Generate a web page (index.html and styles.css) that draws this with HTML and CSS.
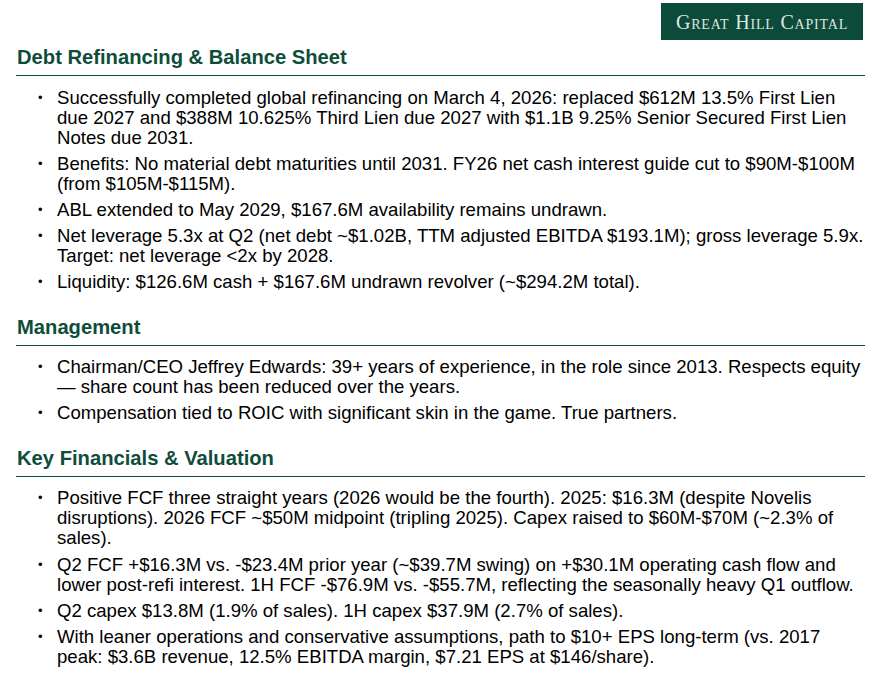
FILE: index.html
```html
<!DOCTYPE html>
<html>
<head>
<meta charset="utf-8">
<link rel="stylesheet" href="styles.css">
</head>
<body>
<div class="page">
  <header class="top">
    <div class="logo">Great Hill Capital</div>
  </header>

  <section class="sec first">
    <h2>Debt Refinancing &amp; Balance Sheet</h2>
    <ul>
      <li>Successfully completed global refinancing on March 4, 2026: replaced $612M 13.5% First Lien due 2027 and $388M 10.625% Third Lien due 2027 with $1.1B 9.25% Senior Secured First Lien Notes due 2031.</li>
      <li>Benefits: No material debt maturities until 2031. FY26 net cash interest guide cut to $90M-$100M (from $105M-$115M).</li>
      <li>ABL extended to May 2029, $167.6M availability remains undrawn.</li>
      <li>Net leverage 5.3x at Q2 (net debt ~$1.02B, TTM adjusted EBITDA $193.1M); gross leverage 5.9x. Target: net leverage &lt;2x by 2028.</li>
      <li>Liquidity: $126.6M cash + $167.6M undrawn revolver (~$294.2M total).</li>
    </ul>
  </section>

  <section class="sec">
    <h2>Management</h2>
    <ul>
      <li>Chairman/CEO Jeffrey Edwards: 39+ years of experience, in the role since 2013. Respects equity — share count has been reduced over the years.</li>
      <li>Compensation tied to ROIC with significant skin in the game. True partners.</li>
    </ul>
  </section>

  <section class="sec">
    <h2>Key Financials &amp; Valuation</h2>
    <ul>
      <li>Positive FCF three straight years (2026 would be the fourth). 2025: $16.3M (despite Novelis disruptions). 2026 FCF ~$50M midpoint (tripling 2025). Capex raised to $60M-$70M (~2.3% of sales).</li>
      <li>Q2 FCF +$16.3M vs. -$23.4M prior year (~$39.7M swing) on +$30.1M operating cash flow and lower post-refi interest. 1H FCF -$76.9M vs. -$55.7M, reflecting the seasonally heavy Q1 outflow.</li>
      <li>Q2 capex $13.8M (1.9% of sales). 1H capex $37.9M (2.7% of sales).</li>
      <li>With leaner operations and conservative assumptions, path to $10+ EPS long-term (vs. 2017 peak: $3.6B revenue, 12.5% EBITDA margin, $7.21 EPS at $146/share).</li>
    </ul>
  </section>
</div>
</body>
</html>
```

FILE: styles.css
```css
html, body {
  margin: 0;
  padding: 0;
  background: #ffffff;
}

body {
  font-family: "Liberation Sans", Arial, sans-serif;
  color: #000000;
}

.page {
  width: 849px;
  padding: 3px 16px 0 16px;
}

.top {
  display: flex;
  justify-content: flex-end;
  padding-right: 2px;
}

.logo {
  width: 202px;
  height: 37px;
  box-sizing: border-box;
  background: #0c4a39;
  color: #dfe6e2;
  font-family: "Liberation Serif", "Times New Roman", serif;
  font-variant: small-caps;
  font-size: 20px;
  letter-spacing: 0.8px;
  display: flex;
  align-items: center;
  justify-content: center;
  padding-top: 1px;
}

.sec h2 {
  margin: 0;
  font-size: 20.2px;
  line-height: 22px;
  font-weight: bold;
  color: #0f4d3b;
  padding: 0 0 7px 1px;
  border-bottom: 1px solid #0f4d3b;
}

.sec {
  margin-top: 23.5px;
}

.sec.first {
  margin-top: 6px;
}

.sec ul {
  list-style: none;
  margin: 0;
  padding: 11.5px 0 0 41px;
}

.sec li {
  position: relative;
  font-size: 18.6px;
  line-height: 20px;
  margin-bottom: 6.2px;
}

.sec li::before {
  content: "\2022";
  position: absolute;
  left: -19px;
  top: 0;
  font-size: 13px;
}
```
